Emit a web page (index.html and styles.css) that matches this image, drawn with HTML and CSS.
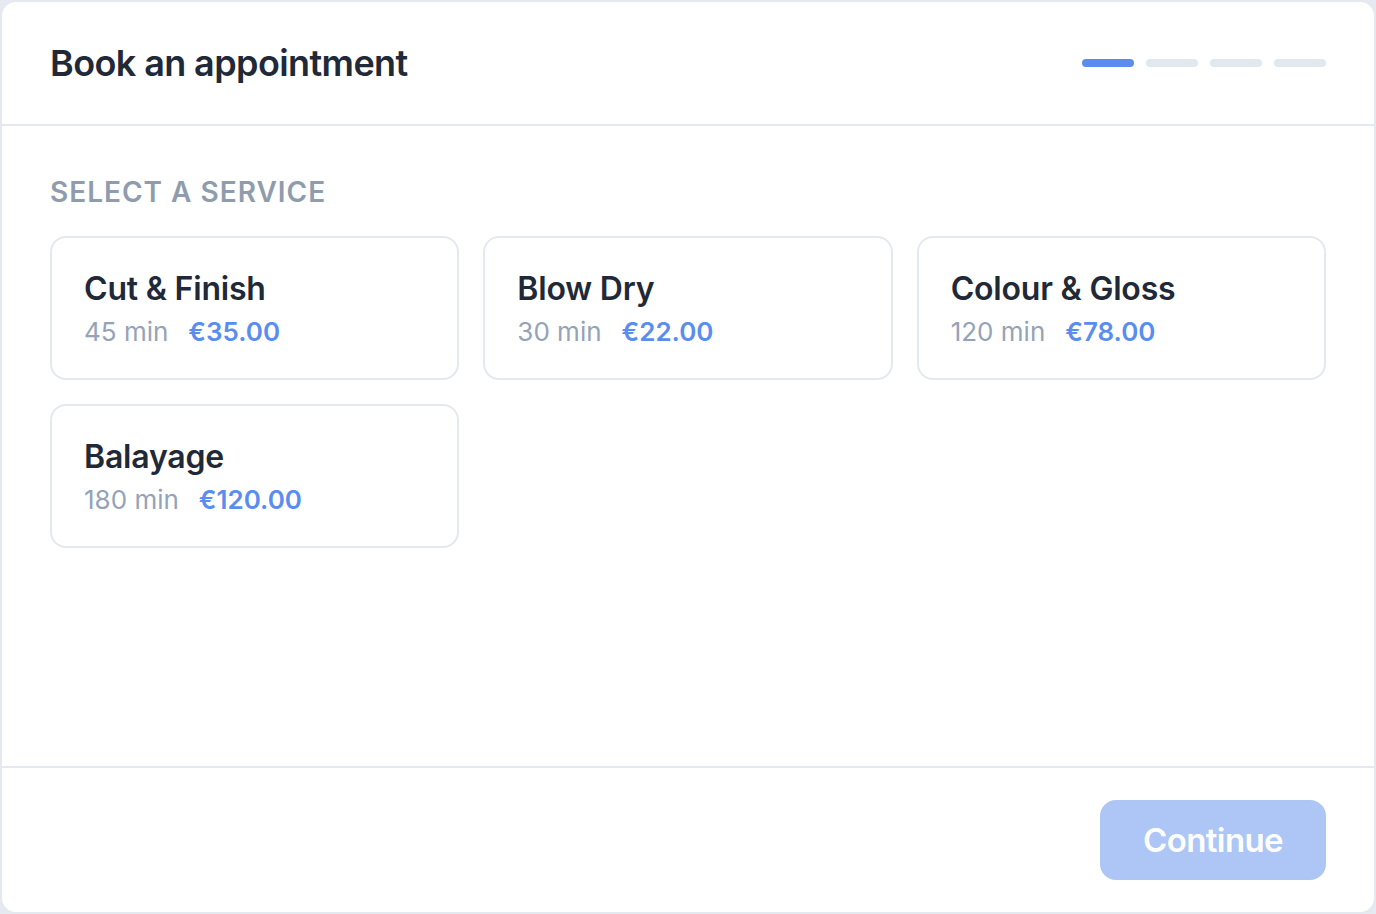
FILE: index.html
```html
<!DOCTYPE html>
<html lang="en">
<head>
<meta charset="utf-8">
<meta name="viewport" content="width=device-width, initial-scale=1.0">
<title>Book an appointment</title>
<link rel="stylesheet" href="styles.css">
</head>
<body>

<div class="booking">
  <!-- Header -->
  <div class="booking-header">
    <h1 class="booking-title">Book an appointment</h1>
    <div class="steps">
      <span class="step active"></span>
      <span class="step"></span>
      <span class="step"></span>
      <span class="step"></span>
    </div>
  </div>

  <!-- Services -->
  <div class="booking-body">
    <div class="section-label">Select a service</div>
    <div class="services">
      <div class="service">
        <div class="service-name">Cut &amp; Finish</div>
        <div class="service-meta"><span class="duration">45 min</span><span class="price">€35.00</span></div>
      </div>
      <div class="service">
        <div class="service-name">Blow Dry</div>
        <div class="service-meta"><span class="duration">30 min</span><span class="price">€22.00</span></div>
      </div>
      <div class="service">
        <div class="service-name">Colour &amp; Gloss</div>
        <div class="service-meta"><span class="duration">120 min</span><span class="price">€78.00</span></div>
      </div>
      <div class="service">
        <div class="service-name">Balayage</div>
        <div class="service-meta"><span class="duration">180 min</span><span class="price">€120.00</span></div>
      </div>
    </div>
  </div>

  <!-- Footer -->
  <div class="booking-footer">
    <button class="btn-continue" disabled>Continue</button>
  </div>
</div>

</body>
</html>
```

FILE: styles.css
```css
/* ======== Reset ======== */
* {
  box-sizing: border-box;
  margin: 0;
  padding: 0;
}

/* ======== Page ======== */
body {
  height: 100vh;
  background: #e5e9f0;
  color: #1f2937;
  font-family: Inter, "Noto Sans", sans-serif;
  overflow: hidden;
}

/* ======== Card ======== */
.booking {
  display: flex;
  flex-direction: column;
  height: 100vh;
  background: #fff;
  border: 2px solid #e4e8ef;
  border-radius: 16px;
  overflow: hidden;
}

/* — header — */
.booking-header {
  display: flex;
  justify-content: space-between;
  align-items: center;
  padding: 39px 48px;
  border-bottom: 2px solid #e4e8ef;
}

.booking-title {
  font-size: 36px;
  line-height: 44px;
  font-weight: 600;
  color: #1f2937;
  letter-spacing: -0.6px;
}

.steps {
  display: flex;
  gap: 12px;
}

.step {
  width: 52px;
  height: 8px;
  background: #e2e8f0;
  border-radius: 4px;
}

.step.active { background: #5b8def; }

/* — body — */
.booking-body {
  flex: 1;
  padding: 49px 48px 0;
}

.section-label {
  margin-bottom: 27px;
  font-size: 28px;
  line-height: 34px;
  font-weight: 600;
  letter-spacing: 1px;
  text-transform: uppercase;
  color: #8e9cad;
}

.services {
  display: grid;
  grid-template-columns: repeat(3, 1fr);
  gap: 24px;
}

.service {
  padding: 31px 32px 28px;
  border: 2px solid #e4e8ef;
  border-radius: 16px;
  background: #fff;
}

.service-name {
  font-size: 32px;
  line-height: 40px;
  font-weight: 600;
  color: #1f2937;
  letter-spacing: -0.2px;
}

.service-meta {
  display: flex;
  gap: 20px;
  margin-top: 5px;
  font-size: 26px;
  line-height: 36px;
}

.duration { color: #94a3b8; }

.price {
  font-weight: 600;
  color: #5b8def;
}

/* — footer — */
.booking-footer {
  display: flex;
  justify-content: flex-end;
  padding: 32px 48px;
  border-top: 2px solid #e4e8ef;
}

.btn-continue {
  width: 226px;
  height: 80px;
  font-family: inherit;
  font-size: 33px;
  font-weight: 600;
  letter-spacing: -0.6px;
  color: #fff;
  background: #adc6f5;
  border: none;
  border-radius: 16px;
}
```
